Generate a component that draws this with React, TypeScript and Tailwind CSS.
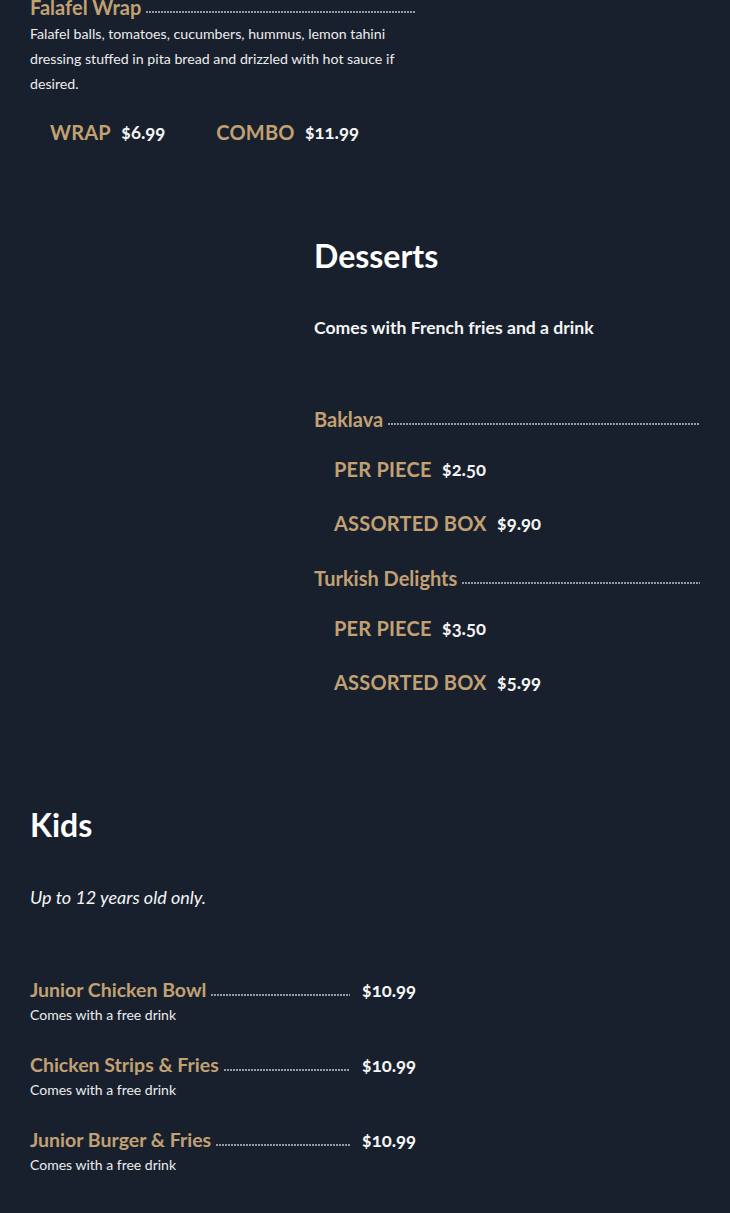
import React from 'react';

interface Option {
  label: string;
  price: string;
}

interface DotItem {
  name: string;
  options: Option[];
}

interface KidsItem {
  name: string;
  price: string;
  note: string;
}

const desserts: DotItem[] = [
  { name: 'Baklava', options: [{ label: 'PER PIECE', price: '$2.50' }, { label: 'ASSORTED BOX', price: '$9.90' }] },
  { name: 'Turkish Delights', options: [{ label: 'PER PIECE', price: '$3.50' }, { label: 'ASSORTED BOX', price: '$5.99' }] },
];

const kids: KidsItem[] = [
  { name: 'Junior Chicken Bowl', price: '$10.99', note: 'Comes with a free drink' },
  { name: 'Chicken Strips & Fries', price: '$10.99', note: 'Comes with a free drink' },
  { name: 'Junior Burger & Fries', price: '$10.99', note: 'Comes with a free drink' },
];

const Dots = () => (
  <span className="ml-[5px] mb-[9px] h-[2px] flex-1 bg-[linear-gradient(to_right,#939cab_1.6px,transparent_1.6px)] bg-[length:3px_2px]" />
);

const OptionRow = ({ label, price }: Option) => (
  <div className="flex items-center leading-[30px]">
    <span className="text-[20px] font-bold tracking-[0.01em] text-[#c2a172]">{label}</span>
    <span className="ml-[10px] text-[18.5px] font-bold text-[#f4f4f4] oldstyle-nums">{price}</span>
  </div>
);

export default function App() {
  return (
    <div className="min-h-screen w-full overflow-hidden bg-[#18202e] font-['Lato','Liberation_Sans',sans-serif] text-[#f4f4f4]">
      {/* falafel wrap, carried over from the section above */}
      <div className="ml-[30px] w-[386px]">
        <div className="-mt-[8px] flex items-end leading-[30px]">
          <span className="text-[20px] font-bold text-[#c2a172]">Falafel Wrap</span>
          <Dots />
        </div>
        <p className="-mt-[1px] text-[14.2px] leading-[25px] text-[#ececec]">
          Falafel balls, tomatoes, cucumbers, hummus, lemon tahini dressing stuffed in pita bread and drizzled with hot
          sauce if desired.
        </p>
        <div className="mt-[21px] flex pl-[20px]">
          <OptionRow label="WRAP" price="$6.99" />
          <div className="ml-[51px]">
            <OptionRow label="COMBO" price="$11.99" />
          </div>
        </div>
      </div>

      {/* desserts */}
      <div className="ml-[314px] mt-[89px] w-[386px]">
        <h2 className="text-[32px] font-bold leading-[40px] text-white">Desserts</h2>
        <p className="mt-[40px] text-[17.6px] font-bold leading-[24px]">Comes with French fries and a drink</p>
        <div className="mt-[64px]">
          {desserts.map((d, i) => (
            <div key={d.name} className={i > 0 ? 'mt-[25px]' : ''}>
              <div className="flex items-end leading-[30px]">
                <span className="text-[20px] font-bold text-[#c2a172]">{d.name}</span>
                <Dots />
              </div>
              <div className="pl-[20px]">
                <div className="mt-[20px]">
                  <OptionRow {...d.options[0]} />
                </div>
                <div className="mt-[24px]">
                  <OptionRow {...d.options[1]} />
                </div>
              </div>
            </div>
          ))}
        </div>
      </div>

      {/* kids */}
      <div className="ml-[30px] mt-[106px] w-[386px] pb-[40px]">
        <h2 className="text-[32px] font-bold leading-[44px] text-white">Kids</h2>
        <p className="mt-[38px] text-[18px] italic leading-[24px]">Up to 12 years old only.</p>
        <div className="mt-[66px]">
          {kids.map((k, i) => (
            <div key={k.name} className={i > 0 ? 'mt-[25px]' : ''}>
              <div className="flex items-end leading-[30px]">
                <span className="text-[19.5px] font-bold text-[#c2a172]">{k.name}</span>
                <Dots />
                <span className="ml-[12px] text-[18.5px] font-bold oldstyle-nums">{k.price}</span>
              </div>
              <p className="text-[14px] leading-[20px] text-[#ececec]">{k.note}</p>
            </div>
          ))}
        </div>
      </div>
    </div>
  );
}
